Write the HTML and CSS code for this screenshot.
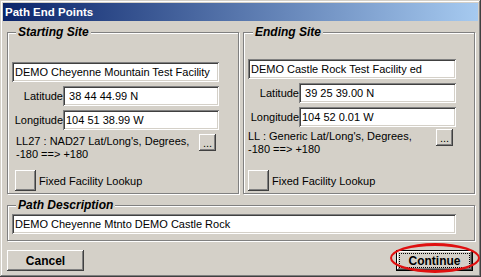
FILE: index.html
```html
<!DOCTYPE html>
<html lang="en">
<head>
    <meta charset="UTF-8">
    <meta name="viewport" content="width=device-width, initial-scale=1.0">
    <title>Path End Points</title>
    <link rel="stylesheet" href="styles.css">
</head>
<body>
    <div class="window">
        <div class="titlebar">Path End Points</div>
        <div class="content">
            <div class="sites">
                <fieldset class="group start">
                    <legend>Starting Site</legend>
                    <div class="group-body">
                        <input class="field" type="text" value="DEMO Cheyenne Mountain Test Facility">
                        <div class="row"><label>Latitude</label><input class="field" type="text" value=" 38 44 44.99 N"></div>
                        <div class="row"><label>Longitude</label><input class="field" type="text" value="104 51 38.99 W"></div>
                        <div class="datum">
                            <p>LL27 : NAD27 Lat/Long's, Degrees,<br>-180 ==&gt; +180</p>
                            <button class="btn small">...</button>
                        </div>
                        <div class="lookup"><button class="btn square"></button><span>Fixed Facility Lookup</span></div>
                    </div>
                </fieldset>
                <fieldset class="group end">
                    <legend>Ending Site</legend>
                    <div class="group-body">
                        <input class="field" type="text" value="DEMO Castle Rock Test Facility ed">
                        <div class="row"><label>Latitude</label><input class="field" type="text" value=" 39 25 39.00 N"></div>
                        <div class="row"><label>Longitude</label><input class="field" type="text" value="104 52 0.01 W"></div>
                        <div class="datum">
                            <p>LL : Generic Lat/Long's, Degrees,<br>-180 ==&gt; +180</p>
                            <button class="btn small">...</button>
                        </div>
                        <div class="lookup"><button class="btn square"></button><span>Fixed Facility Lookup</span></div>
                    </div>
                </fieldset>
            </div>
            <fieldset class="group path">
                <legend>Path Description</legend>
                <div class="group-body">
                    <input class="field" type="text" value="DEMO Cheyenne Mtnto DEMO Castle Rock">
                </div>
            </fieldset>
            <div class="actions">
                <button class="btn wide">Cancel</button>
                <button class="btn wide default">Continue<span class="mark"></span></button>
            </div>
        </div>
    </div>
</body>
</html>
```

FILE: styles.css
```css
* { box-sizing: border-box; }

body {
    margin: 0;
    font-family: "Liberation Sans", Arial, sans-serif;
    font-size: 11px;
    color: #000;
    background: #d4d0c8;
}

.window {
    width: 481px;
    height: 277px;
    padding: 3px;
    background: #d4d0c8;
    box-shadow: inset -1px -1px #404040, inset 1px 1px #d4d0c8,
                inset -2px -2px #808080, inset 2px 2px #fff;
}

.titlebar {
    height: 18px;
    line-height: 18px;
    padding-left: 2px;
    background: linear-gradient(to right, #0a246a, #a6caf0);
    color: #fff;
    font-weight: bold;
    font-size: 11.5px;
}

.content { padding: 4px 3px 0 4px; }

.sites {
    display: flex;
    gap: 4px;
}

.group {
    margin: 0;
    padding: 0;
    min-width: 0;
    border: 1px solid #808080;
    box-shadow: 1px 1px 0 #fff, inset 1px 1px 0 #fff;
}
.sites .group { width: 232px; }

legend {
    margin-left: 8px;
    padding: 0 2px;
    font-size: 12px;
    font-weight: bold;
    font-style: italic;
    line-height: 15px;
    background: #d4d0c8;
}
.end legend { margin-left: 9px; }

.group-body {
    display: flex;
    flex-direction: column;
}
.start .group-body { padding: 22px 19px 2px 4px; }
.end .group-body { padding: 19px 18px 2px 4px; }
.path .group-body { padding: 1px 18px 6px 4px; }

.field {
    font: inherit;
    width: 100%;
    height: 20px;
    border: 0;
    padding: 0 2px 0 3px;
    background: #fff;
    color: #000;
    outline: none;
    box-shadow: inset 1px 1px #808080, inset -1px -1px #fff,
                inset 2px 2px #404040, inset -2px -2px #d4d0c8;
}

.row {
    display: flex;
    align-items: center;
    margin-top: 4px;
}
.row label {
    width: 51px;
    flex: none;
    text-align: right;
}
.row .field { flex: 1; min-width: 0; }

.datum {
    display: flex;
    align-items: flex-start;
}
.start .datum { margin-top: 4px; padding-left: 4px; }
.end .datum { margin-top: 2px; }
.datum p {
    margin: 1px 0 0;
    line-height: 13px;
    flex: 1;
}

.lookup {
    display: flex;
    align-items: center;
    gap: 3px;
}
.start .lookup { margin-top: 9px; padding-left: 3px; }
.end .lookup { margin-top: 14px; }

.btn {
    font: inherit;
    color: #000;
    border: 0;
    padding: 0;
    background: #d4d0c8;
    display: inline-flex;
    align-items: center;
    justify-content: center;
    box-shadow: inset -1px -1px #404040, inset 1px 1px #fff,
                inset -2px -2px #808080, inset 2px 2px #d4d0c8;
}
.btn.small {
    width: 17px;
    height: 17px;
    margin-right: 3px;
    flex: none;
    line-height: 10px;
}
.btn.square { width: 21px; height: 21px; }
.btn.wide {
    width: 77px;
    height: 21px;
    font-size: 12px;
    font-weight: bold;
}

.path { margin-top: 4px; }

.actions {
    display: flex;
    justify-content: space-between;
    margin-top: 9px;
    padding-right: 2px;
}

.default {
    position: relative;
    border: 1px solid #000;
}
.default::before {
    content: "";
    position: absolute;
    inset: 2px;
    border: 1px dotted #000;
}
.mark {
    position: absolute;
    left: -7px;
    top: -8px;
    width: 90px;
    height: 30px;
    border: 2px solid #e01010;
    border-width: 3px 2px;
    border-radius: 50%;
}
```
